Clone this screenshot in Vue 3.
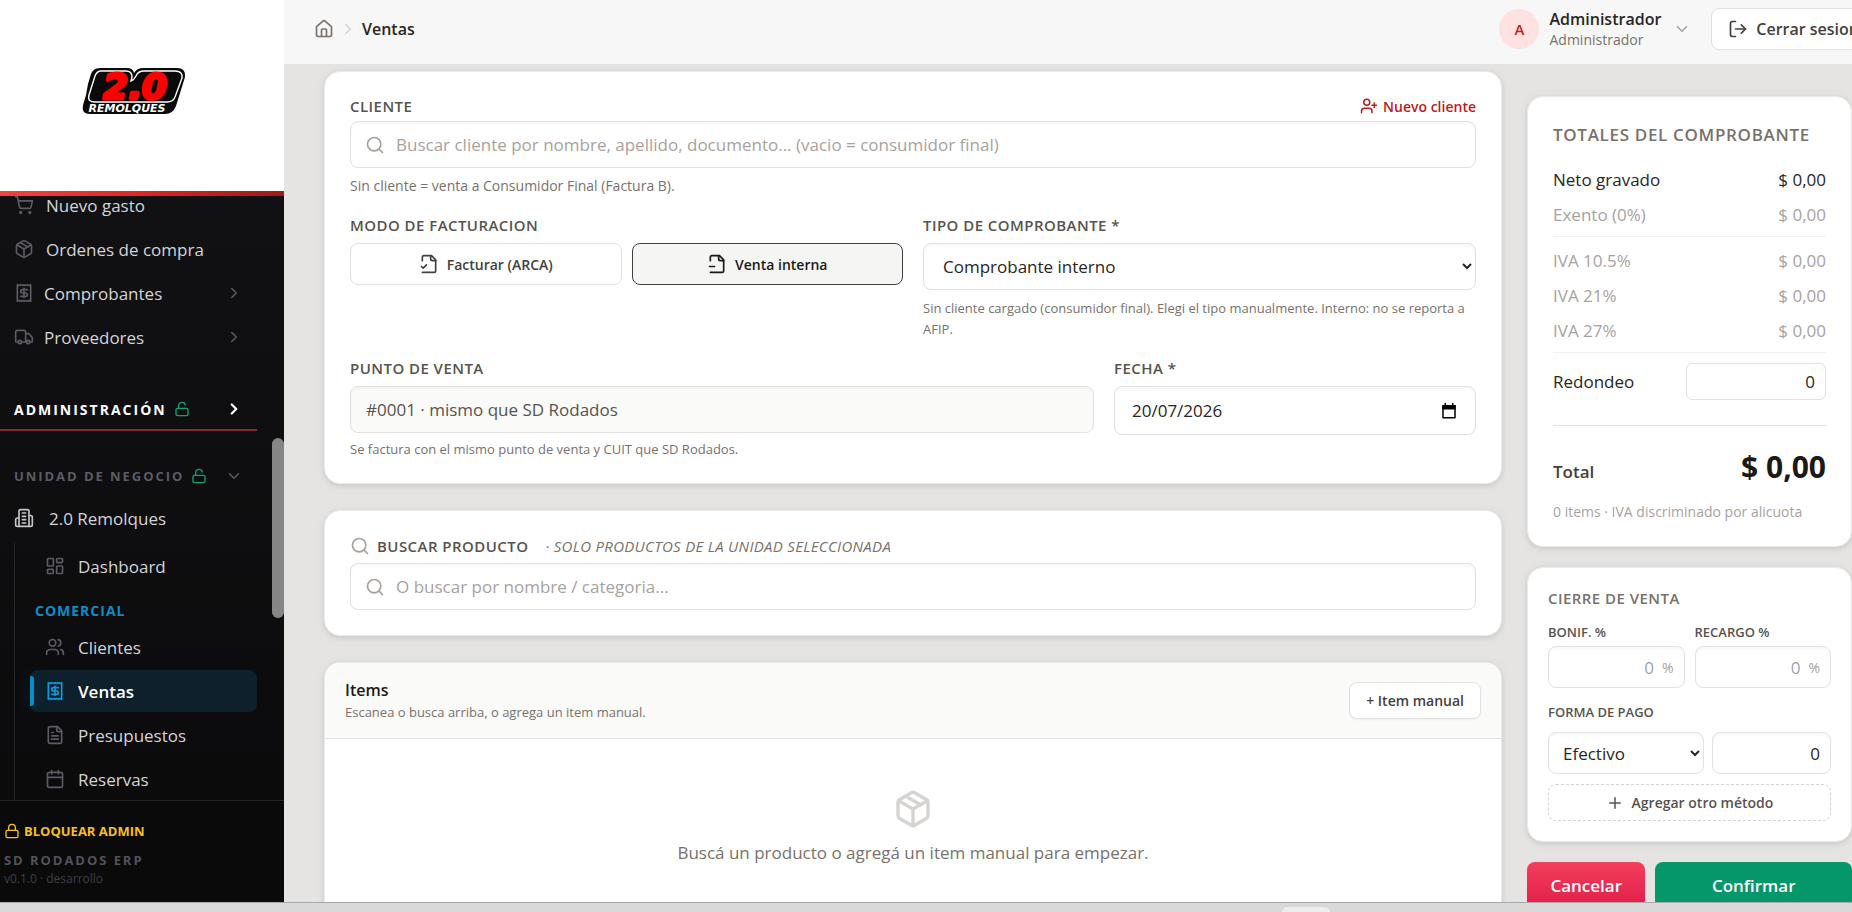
<script setup>
import { h, ref } from 'vue'

const shapes = {
  house: '<path d="M15 21v-8a1 1 0 0 0-1-1h-4a1 1 0 0 0-1 1v8"/><path d="M3 10a2 2 0 0 1 .709-1.528l7-5.999a2 2 0 0 1 2.582 0l7 5.999A2 2 0 0 1 21 10v9a2 2 0 0 1-2 2H5a2 2 0 0 1-2-2z"/>',
  right: '<path d="m9 18 6-6-6-6"/>',
  down: '<path d="m6 9 6 6 6-6"/>',
  cart: '<circle cx="8" cy="21" r="1"/><circle cx="19" cy="21" r="1"/><path d="M2.05 2.05h2l2.66 12.42a2 2 0 0 0 2 1.58h9.78a2 2 0 0 0 1.95-1.57l1.65-7.43H5.12"/>',
  box: '<path d="M11 21.73a2 2 0 0 0 2 0l7-4A2 2 0 0 0 21 16V8a2 2 0 0 0-1-1.73l-7-4a2 2 0 0 0-2 0l-7 4A2 2 0 0 0 3 8v8a2 2 0 0 0 1 1.73z"/><path d="M12 22V12"/><path d="m3.3 7 8.7 5 8.7-5"/><path d="m7.5 4.27 9 5.15"/>',
  receipt: '<path d="M4 2v20l2-1 2 1 2-1 2 1 2-1 2 1 2-1 2 1V2l-2 1-2-1-2 1-2-1-2 1-2-1-2 1Z"/><path d="M16 8h-6a2 2 0 1 0 0 4h4a2 2 0 1 1 0 4H8"/><path d="M12 17.5v-11"/>',
  truck: '<path d="M14 18V6a2 2 0 0 0-2-2H4a2 2 0 0 0-2 2v11a1 1 0 0 0 1 1h2"/><path d="M15 18H9"/><path d="M19 18h2a1 1 0 0 0 1-1v-3.65a1 1 0 0 0-.22-.624l-3.48-4.35A1 1 0 0 0 17.52 8H14"/><circle cx="17" cy="18" r="2"/><circle cx="7" cy="18" r="2"/>',
  unlock: '<rect x="3" y="11" width="18" height="11" rx="2"/><path d="M7 11V7a5 5 0 0 1 9.9-1"/>',
  lock: '<rect x="3" y="11" width="18" height="11" rx="2"/><path d="M7 11V7a5 5 0 0 1 10 0v4"/>',
  building: '<path d="M6 22V4a2 2 0 0 1 2-2h8a2 2 0 0 1 2 2v18Z"/><path d="M6 12H4a2 2 0 0 0-2 2v6a2 2 0 0 0 2 2h2"/><path d="M18 9h2a2 2 0 0 1 2 2v9a2 2 0 0 1-2 2h-2"/><path d="M10 6h4M10 10h4M10 14h4M10 18h4"/>',
  dashboard: '<rect x="3" y="3" width="7" height="9" rx="1"/><rect x="14" y="3" width="7" height="5" rx="1"/><rect x="14" y="12" width="7" height="9" rx="1"/><rect x="3" y="16" width="7" height="5" rx="1"/>',
  users: '<path d="M16 21v-2a4 4 0 0 0-4-4H6a4 4 0 0 0-4 4v2"/><circle cx="9" cy="7" r="4"/><path d="M22 21v-2a4 4 0 0 0-3-3.87"/><path d="M16 3.13a4 4 0 0 1 0 7.75"/>',
  file: '<path d="M15 2H6a2 2 0 0 0-2 2v16a2 2 0 0 0 2 2h12a2 2 0 0 0 2-2V7Z"/><path d="M14 2v4a2 2 0 0 0 2 2h4"/><path d="M10 9H8M16 13H8M16 17H8"/>',
  calendar: '<path d="M8 2v4M16 2v4"/><rect x="3" y="4" width="18" height="18" rx="2"/><path d="M3 10h18"/>',
  fileCheck: '<path d="M4 22h14a2 2 0 0 0 2-2V7l-5-5H6a2 2 0 0 0-2 2v4"/><path d="M14 2v4a2 2 0 0 0 2 2h4"/><path d="m3 15 2 2 4-4"/>',
  fileMinus: '<path d="M4 22h14a2 2 0 0 0 2-2V7l-5-5H6a2 2 0 0 0-2 2v4"/><path d="M14 2v4a2 2 0 0 0 2 2h4"/><path d="M3 15h6"/>',
  userPlus: '<path d="M16 21v-2a4 4 0 0 0-4-4H6a4 4 0 0 0-4 4v2"/><circle cx="9" cy="7" r="4"/><path d="M19 8v6M22 11h-6"/>',
  logout: '<path d="M9 21H5a2 2 0 0 1-2-2V5a2 2 0 0 1 2-2h4"/><path d="m16 17 5-5-5-5"/><path d="M21 12H9"/>',
  search: '<circle cx="11" cy="11" r="8"/><path d="m21 21-4.3-4.3"/>',
  plus: '<path d="M5 12h14M12 5v14"/>',
  date: '<path d="M4 5h16v16H4z"/><path d="M4 5h16v4H4z" fill="currentColor"/><path d="M7 2v3M17 2v3"/>'
}

const Icon = (props) =>
  h('svg', {
    width: props.size || 20,
    height: props.size || 20,
    viewBox: '0 0 24 24',
    fill: 'none',
    stroke: 'currentColor',
    'stroke-width': props.stroke || 2,
    'stroke-linecap': 'round',
    'stroke-linejoin': 'round',
    'aria-hidden': 'true',
    innerHTML: shapes[props.name]
  })
Icon.props = ['name', 'size', 'stroke']

const topLinks = [
  { icon: 'cart', label: 'Nuevo gasto' },
  { icon: 'box', label: 'Ordenes de compra' }
]
const groups = [
  { icon: 'receipt', label: 'Comprobantes' },
  { icon: 'truck', label: 'Proveedores' }
]
const salesLinks = [
  { icon: 'users', label: 'Clientes' },
  { icon: 'receipt', label: 'Ventas', active: true },
  { icon: 'file', label: 'Presupuestos' },
  { icon: 'calendar', label: 'Reservas' }
]
const ivaRows = ['IVA 10.5%', 'IVA 21%', 'IVA 27%']

const mode = ref('interna')
const fecha = ref('20/07/2026')
const redondeo = ref('0')
const monto = ref('0')
</script>

<template>
  <div class="screen">
    <div class="shell">
      <aside class="sidebar">
        <div class="brand">
          <svg class="logo" viewBox="0 0 108 50" role="img" aria-label="2.0 Remolques">
            <path d="M20 2H47Q53 2 54 7Q57 2 63 2H97Q106 2 105 11L96 40Q93 48 85 48H10Q1 48 3 39L6 29L8 18L11 8Q13 2 20 2Z" fill="#0a0a0a" />
            <path d="M21 5H46Q52 5 52 11L51 15Q54 14 56 10Q58 5 64 5H95Q103 5 102 12L95 31Q93 36 87 36H15Q7 36 9 29L15 10Q17 5 21 5Z" fill="#0a0a0a" stroke="#fff" stroke-width="1.4" />
            <text class="digits" x="55" y="33" text-anchor="middle">2.0</text>
            <text class="tag" x="47" y="46" text-anchor="middle">REMOLQUES</text>
          </svg>
        </div>

        <nav class="nav" aria-label="Principal">
          <div class="links">
            <a v-for="l in topLinks" :key="l.label" href="#" class="link wide">
              <Icon :name="l.icon" /><span>{{ l.label }}</span>
            </a>
            <button v-for="g in groups" :key="g.label" type="button" class="link">
              <Icon :name="g.icon" /><span>{{ g.label }}</span><Icon class="end" name="right" size="18" />
            </button>
          </div>

          <button type="button" class="section admin">
            <span>ADMINISTRACIÓN</span><Icon class="open" name="unlock" size="16" /><Icon class="end" name="right" size="18" stroke="3" />
          </button>
          <button type="button" class="section unit">
            <span>UNIDAD DE NEGOCIO</span><Icon class="open" name="unlock" size="16" /><Icon class="end" name="down" size="18" />
          </button>

          <a href="#" class="link wide unit-link"><Icon name="building" /><span>2.0 Remolques</span></a>
          <div class="tree">
            <a href="#" class="link sub"><Icon name="dashboard" /><span>Dashboard</span></a>
            <h2 class="tree-title">COMERCIAL</h2>
            <div class="links">
              <a v-for="l in salesLinks" :key="l.label" href="#" class="link sub" :class="{ active: l.active }">
                <Icon :name="l.icon" /><span>{{ l.label }}</span>
              </a>
            </div>
          </div>
          <span class="thumb"></span>
        </nav>

        <footer class="side-foot">
          <button type="button" class="block-admin"><Icon name="lock" size="16" />BLOQUEAR ADMIN</button>
          <p class="product">SD RODADOS ERP</p>
          <p class="version">v0.1.0 · desarrollo</p>
        </footer>
      </aside>

      <div class="page">
        <header class="topbar">
          <nav class="crumbs" aria-label="Ruta">
            <a href="#" aria-label="Inicio"><Icon name="house" /></a>
            <Icon class="sep" name="right" size="18" />
            <span>Ventas</span>
          </nav>
          <div class="account">
            <button type="button" class="user">
              <span class="avatar">A</span>
              <span class="who"><b>Administrador</b><small>Administrador</small></span>
              <Icon name="down" size="18" />
            </button>
            <button type="button" class="logout"><Icon name="logout" />Cerrar sesion</button>
          </div>
        </header>

        <main class="content">
          <div class="column">
            <section class="card form">
              <div class="field">
                <div class="label-row">
                  <label for="cliente">CLIENTE</label>
                  <button type="button" class="new-client"><Icon name="userPlus" size="18" />Nuevo cliente</button>
                </div>
                <div class="search">
                  <Icon name="search" />
                  <input id="cliente" type="text" placeholder="Buscar cliente por nombre, apellido, documento... (vacio = consumidor final)" />
                </div>
                <p class="help big">Sin cliente = venta a Consumidor Final (Factura B).</p>
              </div>

              <div class="two">
                <div class="field">
                  <span id="modo" class="label">MODO DE FACTURACION</span>
                  <div class="modes" role="group" aria-labelledby="modo">
                    <button type="button" :class="{ on: mode === 'arca' }" @click="mode = 'arca'"><Icon name="fileCheck" />Facturar (ARCA)</button>
                    <button type="button" :class="{ on: mode === 'interna' }" @click="mode = 'interna'"><Icon name="fileMinus" />Venta interna</button>
                  </div>
                </div>
                <div class="field">
                  <label for="tipo">TIPO DE COMPROBANTE *</label>
                  <select id="tipo" class="control"><option>Comprobante interno</option></select>
                  <p class="help">Sin cliente cargado (consumidor final). Elegi el tipo manualmente. Interno: no se reporta a AFIP.</p>
                </div>
              </div>

              <div class="three">
                <div class="field span">
                  <label for="punto">PUNTO DE VENTA</label>
                  <input id="punto" class="control fixed" type="text" readonly value="#0001 · mismo que SD Rodados" />
                  <p class="help">Se factura con el mismo punto de venta y CUIT que SD Rodados.</p>
                </div>
                <div class="field">
                  <label for="fecha">FECHA *</label>
                  <div class="date">
                    <input id="fecha" v-model="fecha" type="text" />
                    <button type="button" aria-label="Abrir calendario"><Icon name="date" size="18" /></button>
                  </div>
                </div>
              </div>
            </section>

            <section class="card finder">
              <div class="finder-head">
                <Icon name="search" />
                <label for="producto">BUSCAR PRODUCTO</label>
                <em>· SOLO PRODUCTOS DE LA UNIDAD SELECCIONADA</em>
              </div>
              <div class="search">
                <Icon name="search" />
                <input id="producto" type="text" placeholder="O buscar por nombre / categoria..." />
              </div>
            </section>

            <section class="card items">
              <div class="items-head">
                <div>
                  <h2>Items</h2>
                  <p>Escanea o busca arriba, o agrega un item manual.</p>
                </div>
                <button type="button">+ Item manual</button>
              </div>
              <div class="empty">
                <Icon name="box" size="40" />
                <p>Buscá un producto o agregá un item manual para empezar.</p>
              </div>
            </section>
          </div>

          <aside class="summary">
            <section class="card totals">
              <h2>TOTALES DEL COMPROBANTE</h2>
              <div class="rows">
                <div class="row strong"><span>Neto gravado</span><span>$ 0,00</span></div>
                <div class="row"><span>Exento (0%)</span><span>$ 0,00</span></div>
              </div>
              <div class="rows ruled">
                <div v-for="r in ivaRows" :key="r" class="row"><span>{{ r }}</span><span>$ 0,00</span></div>
              </div>
              <div class="row strong ruled">
                <label for="redondeo">Redondeo</label>
                <input id="redondeo" v-model="redondeo" type="text" inputmode="decimal" />
              </div>
              <div class="grand"><span>Total</span><strong>$ 0,00</strong></div>
              <p class="note">0 items · IVA discriminado por alicuota</p>
            </section>

            <section class="card closing">
              <h2>CIERRE DE VENTA</h2>
              <div class="percents">
                <div>
                  <label for="bonif">BONIF. %</label>
                  <div class="percent"><input id="bonif" type="text" placeholder="0" /><span>%</span></div>
                </div>
                <div>
                  <label for="recargo">RECARGO %</label>
                  <div class="percent"><input id="recargo" type="text" placeholder="0" /><span>%</span></div>
                </div>
              </div>
              <label class="pay-label" for="forma">FORMA DE PAGO</label>
              <div class="pay">
                <select id="forma"><option>Efectivo</option></select>
                <input v-model="monto" type="text" aria-label="Monto" />
              </div>
              <button type="button" class="add"><Icon name="plus" size="18" />Agregar otro método</button>
            </section>

            <div class="actions">
              <button type="button" class="cancel">Cancelar</button>
              <button type="button" class="confirm">Confirmar</button>
            </div>
          </aside>
        </main>
      </div>
    </div>
    <div class="desk"><span class="desk-tab"></span></div>
  </div>
</template>

<style>
body {
  margin: 0;
  overflow: hidden;
}
</style>

<style scoped>
.screen {
  display: flex;
  flex-direction: column;
  height: 100vh;
  overflow: hidden;
  font-family: "Open Sans", "Noto Sans", sans-serif;
  font-size: 17px;
  color: #292524;
}
.screen *,
.screen *::before {
  box-sizing: border-box;
}
h2,
p {
  margin: 0;
}
button,
input,
select {
  font: inherit;
  color: inherit;
  margin: 0;
}
button {
  padding: 0;
  border: 0;
  background: none;
  cursor: pointer;
  white-space: nowrap;
}
a {
  color: inherit;
  text-decoration: none;
}
svg {
  flex: none;
}
.shell {
  display: flex;
  flex: 1;
  min-height: 0;
  overflow: hidden;
}

/* Sidebar */
.sidebar {
  display: flex;
  flex-direction: column;
  flex: none;
  width: 284px;
  background: linear-gradient(#131316, #0a0a0b);
  color: #d4d4d8;
}
.brand {
  display: flex;
  flex: none;
  justify-content: center;
  align-items: center;
  height: 196px;
  padding: 0 16px 14px 0;
  background: linear-gradient(90deg, #ef4444, #dc2626 50%, #991b1b) bottom / 100% 5px no-repeat #fff;
}
.logo {
  width: 108px;
  height: 50px;
}
.digits {
  font: italic 900 36px "DejaVu Sans", sans-serif;
  fill: #f00;
  stroke: #f00;
  stroke-width: 3;
  stroke-linejoin: round;
}
.tag {
  font: italic 700 11px "DejaVu Sans", sans-serif;
  fill: #fff;
}
.nav {
  position: relative;
  flex: 1;
  min-height: 0;
  overflow: hidden;
  padding-right: 27px;
}
.links {
  display: flex;
  flex-direction: column;
  gap: 2px;
}
.nav > .links {
  margin-top: -12px;
}
.link {
  display: flex;
  align-items: center;
  gap: 10px;
  width: 100%;
  height: 42px;
  padding: 0 14px;
  font-size: 17px;
  font-weight: 500;
  text-align: left;
}
.link.wide {
  gap: 12px;
}
.link svg {
  color: #5b5b64;
}
.end {
  margin-left: auto;
}
.section {
  display: flex;
  align-items: center;
  gap: 7px;
  width: 100%;
  height: 42px;
  padding: 0 14px;
  font-size: 14px;
  font-weight: 700;
  letter-spacing: 2px;
}
.admin {
  margin-top: 31px;
  border-bottom: 2px solid #8a2a2d;
  color: #fff;
}
.unit {
  margin-top: 24px;
  font-size: 13px;
  letter-spacing: 0.15em;
  color: #5b5b64;
}
.open {
  color: #10a36f;
}
.unit-link svg {
  color: #c4c4c9;
}
.unit-link.link {
  gap: 15px;
}
.tree {
  margin-top: 4px;
  margin-left: 14px;
  padding: 2px 0 0 15px;
  border-left: 1px solid #242428;
}
.link.sub {
  gap: 13px;
  padding-left: 15px;
}
.tree-title {
  margin: 13px 0 4px 5px;
  font-size: 14px;
  line-height: 22px;
  font-weight: 700;
  letter-spacing: 1px;
  color: #0e8bca;
}
.link.active {
  position: relative;
  border-radius: 8px;
  background: #0d202b;
  font-weight: 600;
  color: #fff;
}
.link.active::before {
  content: "";
  position: absolute;
  left: 0;
  top: 6px;
  bottom: 6px;
  width: 4px;
  border-radius: 0 3px 3px 0;
  background: #0e8bca;
  box-shadow: 0 0 16px #0e8bca55;
}
.link.active svg {
  color: #0e9bdc;
}
.thumb {
  position: absolute;
  right: 0;
  top: 40%;
  width: 12px;
  height: 180px;
  border-radius: 6px;
  background: #858585;
}
.side-foot {
  flex: none;
  height: 102px;
  padding: 19px 4px 0;
  border-top: 1px solid #242428;
  background: #0a0a0b;
}
.block-admin {
  display: flex;
  align-items: center;
  gap: 4px;
  font-size: 13px;
  line-height: 22px;
  font-weight: 700;
  color: #fbbf24;
}
.product {
  margin-top: 8px;
  font-size: 13px;
  line-height: 20px;
  font-weight: 700;
  letter-spacing: 0.15em;
  color: #52525b;
}
.version {
  font-size: 12px;
  line-height: 18px;
  color: #3f3f46;
}

/* Header */
.page {
  display: flex;
  flex: 1 0 auto;
  flex-direction: column;
  width: calc(100% - 244px);
  min-height: 0;
}
.topbar {
  display: flex;
  flex: none;
  align-items: center;
  justify-content: space-between;
  height: 65px;
  padding: 0 16px 6px 30px;
  border-bottom: 1px solid #e3e2e0;
  background: #f7f7f7;
}
.crumbs {
  display: flex;
  align-items: center;
  gap: 5px;
  font-size: 16px;
  font-weight: 600;
}
.crumbs a {
  display: flex;
  color: #78716c;
}
.crumbs .sep {
  color: #d6d3d1;
}
.account,
.user {
  display: flex;
  align-items: center;
}
.account {
  gap: 20px;
}
.user {
  gap: 10px;
  text-align: left;
}
.user svg {
  margin-left: 2px;
  color: #a8a29e;
}
.avatar {
  display: grid;
  place-items: center;
  width: 40px;
  height: 40px;
  border-radius: 50%;
  background: #fee2e2;
  font-size: 15px;
  font-weight: 600;
  color: #c81e1e;
}
.who {
  display: flex;
  flex-direction: column;
}
.who b {
  font-size: 16px;
  line-height: 21px;
  font-weight: 600;
}
.who small {
  font-size: 14px;
  line-height: 19px;
  color: #78716c;
}
.logout {
  display: flex;
  align-items: center;
  gap: 8px;
  height: 42px;
  padding: 0 16px;
  border: 1px solid #e3e2e0;
  border-radius: 8px;
  background: #fff;
  font-size: 16px;
  font-weight: 600;
  color: #44403c;
}

/* Content */
.content {
  display: grid;
  flex: 1;
  grid-template-columns: minmax(0, 1fr) 325px;
  gap: 25px;
  align-items: start;
  min-height: 0;
  padding: 6px 40px 0;
  overflow: hidden;
  background: #e5e4e2;
}
.column {
  display: flex;
  flex-direction: column;
  gap: 26px;
}
.card {
  border: 1px solid #ebeae8;
  border-radius: 16px;
  background: #fff;
  box-shadow: 0 2px 5px #00000018, 0 1px 14px #0000000a;
}
.form {
  display: flex;
  flex-direction: column;
  gap: 18px;
  padding: 24px 25px 23px;
}
.field {
  display: flex;
  flex-direction: column;
}
.field label,
.label,
.finder-head label {
  font-size: 15px;
  line-height: 20px;
  font-weight: 600;
  letter-spacing: 0.03em;
  color: #57534e;
}
.field > label,
.label {
  margin-bottom: 8px;
}
.label-row {
  display: flex;
  justify-content: space-between;
  align-items: center;
  height: 20px;
  margin-bottom: 5px;
}
.new-client {
  display: flex;
  align-items: center;
  gap: 5px;
  font-size: 14px;
  font-weight: 600;
  color: #b91c1c;
}
.search,
.date,
.percent {
  display: flex;
  align-items: center;
  border: 1px solid #e3e2e0;
  border-radius: 8px;
  background: #fff;
  box-shadow: inset 0 2px 3px #00000009;
}
.search {
  gap: 11px;
  height: 47px;
  padding: 0 14px;
}
.search svg,
.finder-head svg {
  color: #a8a29e;
}
.search input,
.date input,
.percent input {
  flex: 1;
  min-width: 0;
  padding: 0;
  border: 0;
  background: none;
  outline: 0;
}
input::placeholder {
  color: #a8a29e;
  opacity: 1;
}
.control {
  width: 100%;
  height: 47px;
  padding: 0 15px;
  border: 1px solid #e3e2e0;
  border-radius: 8px;
  background: #fff;
  box-shadow: inset 0 2px 3px #00000009;
}
.fixed {
  background: #fafaf9;
  color: #57534e;
}
.help {
  margin-top: 8px;
  font-size: 13px;
  line-height: 21px;
  color: #78716c;
}
.help.big {
  margin-top: 7px;
  font-size: 14px;
  line-height: 22px;
}
.two {
  display: grid;
  grid-template-columns: 1fr 1fr;
  gap: 20px;
}
.three {
  display: grid;
  grid-template-columns: repeat(3, minmax(0, 1fr));
  gap: 20px;
}
.span {
  grid-column: span 2;
}
.span .help {
  margin-top: 6px;
}
.modes {
  display: grid;
  grid-template-columns: 1fr 1fr;
  gap: 10px;
}
.modes button {
  display: flex;
  justify-content: center;
  align-items: center;
  gap: 8px;
  height: 42px;
  border: 1px solid #e3e2e0;
  border-radius: 8px;
  background: #fff;
  font-size: 14px;
  font-weight: 600;
  color: #44403c;
}
.modes button.on {
  border-color: #44403c;
  background: #f5f5f4;
  color: #1c1917;
}
.date {
  height: 49px;
  padding: 0 17px;
}
.date button {
  display: flex;
  color: #000;
}
.finder {
  padding: 24px 25px 25px;
}
.finder-head {
  display: flex;
  align-items: center;
  gap: 7px;
  height: 22px;
  margin-bottom: 6px;
}
.finder-head em {
  margin-left: 10px;
  font-size: 15px;
  letter-spacing: 0.02em;
  color: #78716c;
}
.items {
  overflow: hidden;
}
.items-head {
  display: flex;
  justify-content: space-between;
  align-items: center;
  height: 76px;
  padding: 0 20px;
  border-bottom: 1px solid #e3e2e0;
  background: #fafaf9;
}
.items-head h2 {
  font-size: 16px;
  line-height: 24px;
  font-weight: 600;
  color: #1c1917;
}
.items-head p {
  font-size: 13px;
  line-height: 21px;
  color: #78716c;
}
.items-head button {
  height: 37px;
  padding: 0 16px;
  border: 1px solid #e3e2e0;
  border-radius: 8px;
  background: #fff;
  box-shadow: 0 1px 2px #0000000d;
  font-size: 14px;
  font-weight: 600;
  color: #44403c;
}
.empty {
  display: flex;
  flex-direction: column;
  align-items: center;
  gap: 11px;
  padding: 50px 20px;
  color: #78716c;
}
.empty svg {
  color: #d6d3d1;
}
.empty p {
  font-size: 17px;
  line-height: 26px;
}

/* Totals */
.summary {
  display: flex;
  flex-direction: column;
  gap: 20px;
  padding-top: 25px;
}
.totals {
  padding: 24px 25px 23px;
}
.totals h2 {
  margin-bottom: 17px;
  font-size: 17px;
  line-height: 28px;
  font-weight: 600;
  letter-spacing: 0.04em;
  color: #78716c;
}
.rows {
  display: flex;
  flex-direction: column;
  gap: 8px;
}
.row {
  display: flex;
  justify-content: space-between;
  align-items: center;
  line-height: 27px;
  color: #a8a29e;
}
.row.strong {
  color: #292524;
}
.ruled {
  margin-top: 8px;
  padding-top: 10px;
  border-top: 1px solid #f1f0ef;
}
.row input {
  width: 140px;
  height: 37px;
  padding: 0 10px;
  border: 1px solid #e3e2e0;
  border-radius: 6px;
  text-align: right;
}
.grand {
  display: flex;
  justify-content: space-between;
  align-items: baseline;
  margin-top: 25px;
  padding-top: 20px;
  border-top: 1px solid #e3e2e0;
  font-weight: 600;
  color: #44403c;
}
.grand strong {
  font-size: 30px;
  line-height: 42px;
  font-weight: 700;
  color: #1c1917;
}
.note {
  margin-top: 13px;
  font-size: 14px;
  line-height: 22px;
  color: #a8a29e;
}

/* Closing */
.closing {
  padding: 18px 20px 20px;
}
.closing h2 {
  margin-bottom: 12px;
  font-size: 15px;
  line-height: 24px;
  font-weight: 600;
  letter-spacing: 0.03em;
  color: #78716c;
}
.closing label {
  display: block;
  margin-bottom: 3px;
  font-size: 13px;
  line-height: 21px;
  font-weight: 600;
  color: #57534e;
}
.percents {
  display: grid;
  grid-template-columns: repeat(2, minmax(0, 1fr));
  gap: 10px;
}
.percent {
  gap: 8px;
  height: 42px;
  padding: 0 10px;
}
.percent input {
  text-align: right;
}
.percent input::placeholder {
  color: #9ca3af;
}
.percent span {
  font-size: 14px;
  color: #a8a29e;
}
.closing .pay-label {
  margin: 14px 0 9px;
}
.pay {
  display: grid;
  grid-template-columns: minmax(0, 156fr) minmax(0, 119fr);
  gap: 8px;
}
.pay select,
.pay input {
  width: 100%;
  height: 42px;
  padding: 0 10px;
  border: 1px solid #e3e2e0;
  border-radius: 8px;
  background: #fff;
  box-shadow: inset 0 2px 3px #00000009;
}
.pay input {
  text-align: right;
}
.add {
  display: flex;
  justify-content: center;
  align-items: center;
  gap: 8px;
  width: 100%;
  height: 37px;
  margin-top: 10px;
  border: 1px dashed #d6d3d1;
  border-radius: 8px;
  font-size: 14px;
  font-weight: 600;
  color: #57534e;
}
.actions {
  display: grid;
  grid-template-columns: 118fr 196fr;
  gap: 10px;
}
.actions button {
  height: 46px;
  border-radius: 8px;
  font-weight: 600;
  color: #fff;
}
.cancel {
  background: linear-gradient(#f43f5e, #e11d48);
}
.confirm {
  background: #059669;
}
.desk {
  display: flex;
  flex: none;
  box-sizing: border-box;
  height: 10px;
  padding-top: 4px;
  padding-left: 69.2%;
  border-top: 1px solid #a8a8a8;
  background: #d9d9d9;
}
.desk-tab {
  width: 48px;
  border-radius: 5px 5px 0 0;
  background: #ececec;
}
</style>
